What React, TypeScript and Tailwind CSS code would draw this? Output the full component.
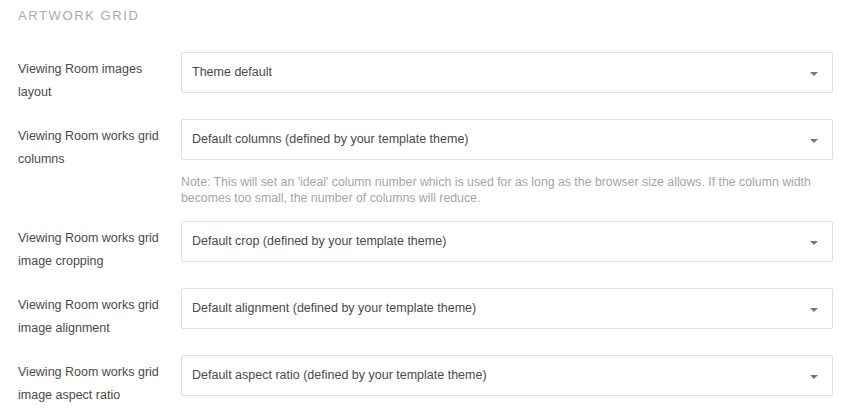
const rows = [
  { label: 'Viewing Room images layout', value: 'Theme default' },
  {
    label: 'Viewing Room works grid columns',
    value: 'Default columns (defined by your template theme)',
    note: "Note: This will set an 'ideal' column number which is used for as long as the browser size allows. If the column width becomes too small, the number of columns will reduce.",
  },
  { label: 'Viewing Room works grid image cropping', value: 'Default crop (defined by your template theme)' },
  { label: 'Viewing Room works grid image alignment', value: 'Default alignment (defined by your template theme)' },
  { label: 'Viewing Room works grid image aspect ratio', value: 'Default aspect ratio (defined by your template theme)' },
];

function Select({ value }: { value: string }) {
  return (
    <div className="flex h-[41px] items-center justify-between rounded-[2px] border border-[#dedede] bg-white pl-[10px] pr-[14px]">
      <span className="text-[12.5px] text-[#4a4a4a]">{value}</span>
      <svg width="8" height="4" viewBox="0 0 8 4" className="mt-[2px]">
        <path d="M0 0h8L4 4z" fill="#777" />
      </svg>
    </div>
  );
}

export default function App() {
  return (
    <div className="min-h-[415px] bg-white pl-[18px] pr-[15px] pt-[7px] font-['Liberation_Sans',Arial,sans-serif]">
      <h2 className="text-[13px] leading-[17px] tracking-[1.6px] text-[#ababab]">ARTWORK GRID</h2>
      <div className="mt-[28px] flex flex-col gap-[15px]">
        {rows.map((row) => (
          <div key={row.label} className="flex items-start">
            <div className="w-[163px] shrink-0 pr-[10px] pt-[6px] text-[12.5px] leading-[23px] text-[#4a4a4a]">
              {row.label}
            </div>
            <div className="flex-1">
              <Select value={row.value} />
              {row.note && (
                <p className="mt-[14px] text-[12.3px] leading-[16px] text-[#a5a5a5]">{row.note}</p>
              )}
            </div>
          </div>
        ))}
      </div>
    </div>
  );
}
